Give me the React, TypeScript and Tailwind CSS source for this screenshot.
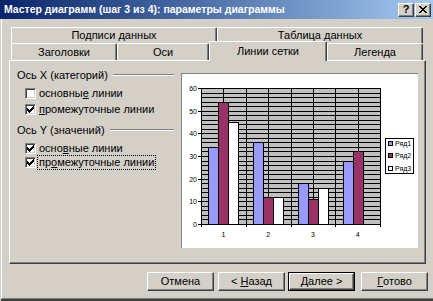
import React from "react";

const raised =
  "border border-t-white border-l-white border-r-[#404040] border-b-[#404040] shadow-[inset_-1px_-1px_0_#808080]";

function Tab({ w, label, active = false, h }: { w: string; label: string; active?: boolean; h: string }) {
  return (
    <div
      className={`${w} ${h} flex items-center justify-center border-t border-l border-r border-t-white border-l-white border-r-[#404040] rounded-t-[2px] shadow-[inset_-1px_0_0_#808080] bg-[#d4d0c8] ${
        active ? "relative z-10 -mt-[2px] -mb-[1px]" : ""
      }`}
    >
      <span className="leading-none">{label}</span>
    </div>
  );
}

function CheckBox({ checked }: { checked: boolean }) {
  return (
    <div className="w-[11px] h-[11px] bg-white border border-t-[#808080] border-l-[#808080] border-r-white border-b-white shadow-[inset_1px_1px_0_#404040,inset_-1px_-1px_0_#d4d0c8] flex items-center justify-center shrink-0">
      {checked && (
        <svg width="7" height="7" viewBox="0 0 7 7" shapeRendering="crispEdges">
          <path d="M0 2h1v1h1v1h1v-1h1v-1h1v-1h1v-1h1v3h-1v1h-1v1h-1v1h-1v1h-1v-1h-1v-1h-1z" fill="#000" />
        </svg>
      )}
    </div>
  );
}

function GroupHead({ label }: { label: string }) {
  return (
    <div className="flex items-center h-[12px]">
      <span className="leading-none whitespace-nowrap">{label}</span>
      <div className="flex-1 ml-[5px] h-[2px] border-t border-t-[#808080] border-b border-b-white" />
    </div>
  );
}

function Chart() {
  const x0 = 19;
  const x1 = 198;
  const y0 = 14;
  const y1 = 150;
  const k = (y1 - y0) / 60;
  const catW = (x1 - x0) / 4;
  const barW = catW / 4.5;
  const data = [
    [34, 54, 45],
    [36, 12, 12],
    [18, 11, 16],
    [28, 32, 0],
  ];
  const colors = ["#9999ff", "#993366", "#ffffff"];
  const hLines: number[] = [];
  for (let v = 0; v <= 60; v += 2) hLines.push(Math.round(y1 - v * k) + 0.5);
  const vLines: number[] = [];
  for (let i = 0; i <= 8; i++) vLines.push(Math.round(x0 + (i * (x1 - x0)) / 8) + 0.5);
  const majors = [0, 10, 20, 30, 40, 50, 60];
  return (
    <svg width="236" height="174" viewBox="0 0 236 174" shapeRendering="crispEdges" style={{ fontFamily: "'Liberation Sans', Arial, sans-serif" }}>
      <rect x={x0} y={y0} width={x1 - x0} height={y1 - y0} fill="#c0c0c0" />
      {hLines.map((y, i) => (
        <line key={"h" + i} x1={x0} x2={x1} y1={y} y2={y} stroke="#000" strokeWidth="1" />
      ))}
      {vLines.map((x, i) => (
        <line key={"v" + i} x1={x} x2={x} y1={y0} y2={y1} stroke="#000" strokeWidth="1" />
      ))}
      {data.map((vals, c) =>
        vals.map((v, s) => {
          if (!v) return null;
          const bx = Math.round(x0 + c * catW + barW * 0.75 + s * barW);
          const bx2 = Math.round(x0 + c * catW + barW * 0.75 + (s + 1) * barW);
          const by = Math.round(y1 - v * k);
          return (
            <rect key={c + "-" + s} x={bx + 0.5} y={by + 0.5} width={bx2 - bx} height={Math.round(y1) - by} fill={colors[s]} stroke="#000" strokeWidth="1" />
          );
        })
      )}
      {majors.map((v) => {
        const y = Math.round(y1 - v * k) + 0.5;
        return (
          <g key={"m" + v}>
            <line x1={x0 - 3} x2={x0} y1={y} y2={y} stroke="#000" />
            <text x={x0 - 4} y={y + 2.5} fontSize="7" textAnchor="end" fill="#000">
              {v}
            </text>
          </g>
        );
      })}
      {[0, 1, 2, 3, 4].map((i) => {
        const x = Math.round(x0 + i * catW) + 0.5;
        return <line key={"t" + i} x1={x} x2={x} y1={y1} y2={y1 + 3} stroke="#000" />;
      })}
      {[1, 2, 3, 4].map((n, i) => (
        <text key={"c" + n} x={x0 + (i + 0.5) * catW} y={163} fontSize="7" textAnchor="middle" fill="#000">
          {n}
        </text>
      ))}
      <rect x={203.5} y={64.5} width={28} height={35} fill="#fff" stroke="#000" />
      {["Ряд1", "Ряд2", "Ряд3"].map((l, i) => {
        const cy = 69 + i * 12.5;
        return (
          <g key={l}>
            <rect x={206.5} y={Math.round(cy - 2.5) + 0.5} width={4} height={4} fill={colors[i]} stroke="#000" />
            <text x={213} y={cy + 2.5} fontSize="7" fill="#000">
              {l}
            </text>
          </g>
        );
      })}
    </svg>
  );
}

export default function App() {
  return (
    <div className="w-[433px] h-[301px] overflow-hidden bg-[#d4d0c8] flex flex-col text-[11px] text-black font-['Liberation_Sans',Arial,sans-serif]">
      {/* title bar */}
      <div className="h-[19px] shrink-0 flex items-center justify-between bg-gradient-to-r from-[#0a246a] to-[#a6caf0] pl-[4px] pr-[2px]">
        <span className="text-white font-bold text-[10.5px] leading-none whitespace-nowrap">
          Мастер диаграмм (шаг 3 из 4): параметры диаграммы
        </span>
        <div className="flex gap-[1px]">
          <div className={`w-[16px] h-[14px] bg-[#d4d0c8] ${raised} flex items-center justify-center font-bold text-[11px] leading-none`}>?</div>
          <div className={`w-[16px] h-[14px] bg-[#d4d0c8] ${raised} flex items-center justify-center`}>
            <svg width="8" height="7" viewBox="0 0 8 7" shapeRendering="crispEdges">
              <path d="M0 0h2v1h1v1h2v-1h1v-1h2v1h-1v1h-1v1h-1v1h1v1h1v1h1v1h-2v-1h-1v-1h-2v1h-1v1h-2v-1h1v-1h1v-1h1v-1h-1v-1h-1v-1h-1z" fill="#000" />
            </svg>
          </div>
        </div>
      </div>

      {/* body */}
      <div className="flex-1 flex flex-col ml-[1px] border-l border-l-white border-b border-b-[#808080] shadow-[0_2px_0_#404040] mb-[2px]">
        {/* tabs */}
        <div className="pt-[8px] ml-[9px] flex">
          <Tab w="w-[206px]" h="h-[16px]" label="Подписи данных" />
          <Tab w="w-[206px]" h="h-[16px]" label="Таблица данных" />
        </div>
        <div className="ml-[9px] flex items-end">
          <Tab w="w-[106px]" h="h-[17px]" label="Заголовки" />
          <Tab w="w-[92px]" h="h-[17px]" label="Оси" />
          <Tab w="w-[118px]" h="h-[20px]" label="Линии сетки" active />
          <Tab w="w-[96px]" h="h-[17px]" label="Легенда" />
        </div>

        {/* page */}
        <div className="ml-[7px] w-[417px] h-[204px] border border-t-white border-l-white border-r-[#404040] border-b-[#404040] shadow-[inset_-1px_-1px_0_#808080] flex items-start pl-[7px] pt-[8px]">
          <div className="w-[157px] flex flex-col">
            <GroupHead label="Ось X (категорий)" />
            <div className="mt-[6px] pl-[8px] flex items-center h-[12px]">
              <CheckBox checked={false} />
              <span className="ml-[3px] leading-none whitespace-nowrap">
                основны<span className="underline">е</span> линии
              </span>
            </div>
            <div className="mt-[4px] pl-[8px] flex items-center h-[12px]">
              <CheckBox checked />
              <span className="ml-[3px] leading-none whitespace-nowrap">
                <span className="underline">п</span>ромежуточные линии
              </span>
            </div>
            <div className="mt-[9px]">
              <GroupHead label="Ось Y (значений)" />
            </div>
            <div className="mt-[6px] pl-[8px] flex items-center h-[12px]">
              <CheckBox checked />
              <span className="ml-[3px] leading-none whitespace-nowrap">
                осно<span className="underline">в</span>ные линии
              </span>
            </div>
            <div className="mt-[2px] pl-[8px] flex items-center h-[13px]">
              <CheckBox checked />
              <span className="ml-[2px] px-[1px] py-[1px] leading-none whitespace-nowrap outline-1 outline-dotted outline-black">
                пр<span className="underline">о</span>межуточные линии
              </span>
            </div>
          </div>
          <div className="ml-[7px] mt-[4px] w-[237px] h-[175px] bg-white border-t border-l border-t-[#808080] border-l-[#808080]">
            <Chart />
          </div>
        </div>

        {/* buttons */}
        <div className="mt-[8px] flex">
          <div className={`ml-[145px] w-[67px] h-[19px] ${raised} flex items-center justify-center`}>Отмена</div>
          <div className={`ml-[4px] w-[67px] h-[19px] ${raised} flex items-center justify-center`}>
            &lt; <span className="underline ml-[3px]">Н</span>азад
          </div>
          <div className="ml-[3px] w-[67px] h-[19px] border border-black">
            <div className={`w-full h-full ${raised} flex items-center justify-center`}>
              <span className="underline">Д</span>алее &gt;
            </div>
          </div>
          <div className={`ml-[6px] w-[67px] h-[19px] ${raised} flex items-center justify-center`}>
            <span className="underline">Г</span>отово
          </div>
        </div>
      </div>
    </div>
  );
}
